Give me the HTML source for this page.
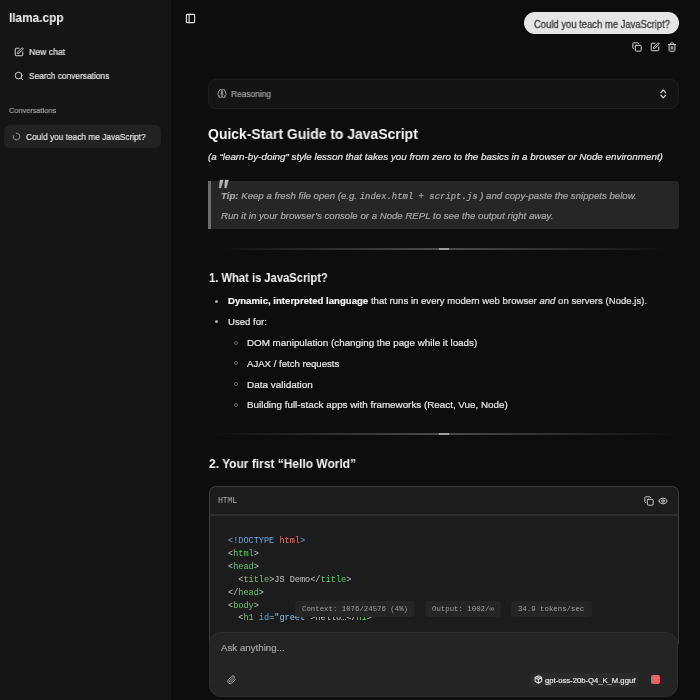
<!DOCTYPE html>
<html><head><meta charset="utf-8">
<style>
*{margin:0;padding:0;box-sizing:border-box}
html,body{width:700px;height:700px;overflow:hidden;background:#0d0d0d;font-family:"Liberation Sans",sans-serif;color:#e8e8e8}
.a{position:absolute}
.mono{font-family:"Liberation Mono",monospace}
svg{position:absolute;overflow:visible}
.hr{position:absolute;left:208px;width:471px;height:2px;background:linear-gradient(90deg,rgba(80,80,80,0),#4c4c4c 50%,rgba(80,80,80,0))}.hl{position:absolute;left:439px;width:9.5px;height:2px;background:#9c9c9c}
.t{position:absolute;white-space:nowrap;line-height:1;transform-origin:0 0;will-change:transform}
.g{color:#66c96e}
</style></head><body>
<div class="a" style="left:0;top:0;width:171px;height:700px;background:#151515"></div>
<svg style="left:14px;top:47px" width="10" height="10" viewBox="0 0 24 24" fill="none" stroke="#d4d4d4" stroke-width="2.4" stroke-linecap="round" stroke-linejoin="round"><path d="M12 3H5a2 2 0 0 0-2 2v14a2 2 0 0 0 2 2h14a2 2 0 0 0 2-2v-7"/><path d="M18.375 2.625a1 1 0 0 1 3 3l-9.013 9.014a2 2 0 0 1-.853.505l-2.873.84a.5.5 0 0 1-.62-.62l.84-2.873a2 2 0 0 1 .506-.852z"/></svg>
<svg style="left:14px;top:71px" width="10" height="10" viewBox="0 0 24 24" fill="none" stroke="#d4d4d4" stroke-width="2.4" stroke-linecap="round" stroke-linejoin="round"><circle cx="11" cy="11" r="8"/><path d="m21 21-4.3-4.3"/></svg>
<div class="a" style="left:4px;top:125px;width:157px;height:23px;border-radius:6px;background:#222"></div>
<svg style="left:12px;top:132px" width="9" height="9" viewBox="0 0 24 24" fill="none" stroke="#a1a1a1" stroke-width="2.5" stroke-linecap="round" stroke-linejoin="round"><path transform="rotate(-95 12 12)" d="M21 12a9 9 0 1 1-6.219-8.56"/></svg>
<svg style="left:185px;top:13px" width="11" height="11" viewBox="0 0 24 24" fill="none" stroke="#e5e5e5" stroke-width="2.4" stroke-linecap="round" stroke-linejoin="round"><rect width="18" height="18" x="3" y="3" rx="2"/><path d="M9 3v18"/></svg>
<div class="a" style="left:524px;top:12px;width:155px;height:22px;border-radius:11px;background:#e5e5e5"></div>
<svg style="left:632px;top:42px" width="10" height="10" viewBox="0 0 24 24" fill="none" stroke="#d4d4d4" stroke-width="2.4" stroke-linecap="round" stroke-linejoin="round"><rect width="14" height="14" x="8" y="8" rx="2"/><path d="M4 16c-1.1 0-2-.9-2-2V4c0-1.1.9-2 2-2h10c1.1 0 2 .9 2 2"/></svg>
<svg style="left:650px;top:42px" width="10" height="10" viewBox="0 0 24 24" fill="none" stroke="#d4d4d4" stroke-width="2.4" stroke-linecap="round" stroke-linejoin="round"><path d="M12 3H5a2 2 0 0 0-2 2v14a2 2 0 0 0 2 2h14a2 2 0 0 0 2-2v-7"/><path d="M18.375 2.625a1 1 0 0 1 3 3l-9.013 9.014a2 2 0 0 1-.853.505l-2.873.84a.5.5 0 0 1-.62-.62l.84-2.873a2 2 0 0 1 .506-.852z"/></svg>
<svg style="left:667px;top:42px" width="10" height="10" viewBox="0 0 24 24" fill="none" stroke="#d4d4d4" stroke-width="2.4" stroke-linecap="round" stroke-linejoin="round"><path d="M3 6h18"/><path d="M19 6v14c0 1-1 2-2 2H7c-1 0-2-1-2-2V6"/><path d="M8 6V4c0-1 1-2 2-2h4c1 0 2 1 2 2v2"/><path d="M10 11v6M14 11v6"/></svg>
<div class="a" style="left:208px;top:79px;width:471px;height:30px;border-radius:8px;background:#141414;border:1px solid #1f1f1f"></div>
<svg style="left:217px;top:88px" width="10" height="11" viewBox="0 0 24 24" fill="none" stroke="#a1a1a1" stroke-width="2.2" stroke-linecap="round" stroke-linejoin="round"><path d="M12 5a3 3 0 1 0-5.997.125 4 4 0 0 0-2.526 5.77 4 4 0 0 0 .556 6.588A4 4 0 1 0 12 18Z"/><path d="M12 5a3 3 0 1 1 5.997.125 4 4 0 0 1 2.526 5.77 4 4 0 0 1-.556 6.588A4 4 0 1 1 12 18Z"/><path d="M15 13a4.5 4.5 0 0 1-3-4 4.5 4.5 0 0 1-3 4"/><path d="M17.599 6.5a3 3 0 0 0 .399-1.375"/><path d="M6.003 5.125A3 3 0 0 0 6.401 6.5"/><path d="M3.477 10.896a4 4 0 0 1 .585-.396"/><path d="M19.938 10.5a4 4 0 0 1 .585.396"/><path d="M6 18a4 4 0 0 1-1.967-.516"/><path d="M19.967 17.484A4 4 0 0 1 18 18"/></svg>
<svg style="left:0;top:0" width="700" height="700" viewBox="0 0 700 700" fill="none" stroke="#c8c8c8" stroke-width="1.3" stroke-linecap="round" stroke-linejoin="round"><path d="M660.9 92.6 L663.25 89.9 L665.6 92.6 M660.9 95.2 L663.25 97.9 L665.6 95.2"/></svg>
<div class="a" style="left:208px;top:181px;width:471px;height:48px;border-radius:0 3px 3px 0;background:#262626;border-left:3px solid #6e6e6e"></div>
<svg style="left:218px;top:179px" width="12" height="10" viewBox="0 0 12 10"><path d="M2.0 1.0 L5.3 1.0 L2.9 8.9 L1.2 8.9 Z M7.0 1.0 L10.5 1.0 L8.4 8.9 L6.6 8.9 Z" fill="#b4b4b4" stroke="#b4b4b4" stroke-width="0.4" stroke-linejoin="round"/></svg>
<div class="hr" style="top:248px"></div><div class="hl" style="top:248px"></div>
<div class="a" style="left:214.5px;top:299.70000000000005px;width:3.8px;height:3.8px;border-radius:50%;background:#a8a8a8"></div>
<div class="a" style="left:214.5px;top:319.70000000000005px;width:3.8px;height:3.8px;border-radius:50%;background:#a8a8a8"></div>
<div class="a" style="left:234.1px;top:340.59999999999997px;width:4.2px;height:4.2px;border-radius:50%;border:0.8px solid #666"></div>
<div class="a" style="left:234.1px;top:360.9px;width:4.2px;height:4.2px;border-radius:50%;border:0.8px solid #666"></div>
<div class="a" style="left:234.1px;top:382.29999999999995px;width:4.2px;height:4.2px;border-radius:50%;border:0.8px solid #666"></div>
<div class="a" style="left:234.1px;top:402.59999999999997px;width:4.2px;height:4.2px;border-radius:50%;border:0.8px solid #666"></div>
<div class="hr" style="top:433px"></div><div class="hl" style="top:433px"></div>
<div class="a" style="left:209px;top:486px;width:470px;height:158px;border-radius:7px 7px 0 0;background:#1c1c1c;border:1px solid #3c3c3c;border-bottom:none"></div>
<div class="a" style="left:210px;top:514px;width:468px;height:2px;background:#2f2f2f"></div>
<svg style="left:644px;top:496px" width="10" height="10" viewBox="0 0 24 24" fill="none" stroke="#c8c8c8" stroke-width="2.4" stroke-linecap="round" stroke-linejoin="round"><rect width="14" height="14" x="8" y="8" rx="2"/><path d="M4 16c-1.1 0-2-.9-2-2V4c0-1.1.9-2 2-2h10c1.1 0 2 .9 2 2"/></svg>
<svg style="left:658px;top:496px" width="10" height="10" viewBox="0 0 24 24" fill="none" stroke="#c8c8c8" stroke-width="2.4" stroke-linecap="round" stroke-linejoin="round"><path d="M2.062 12.348a1 1 0 0 1 0-.696 10.75 10.75 0 0 1 19.876 0 1 1 0 0 1 0 .696 10.75 10.75 0 0 1-19.876 0"/><circle cx="12" cy="12" r="3"/></svg>
<div class="t mono" style="left:227.7px;top:534.87px;font-size:8.57px;line-height:12.9px;color:#c4c4c4;white-space:pre"><span style="color:#6aa8e0">&lt;!DOCTYPE <span style="color:#e8705f">html</span>&gt;</span>
&lt;<span class="g">html</span>&gt;
&lt;<span class="g">head</span>&gt;
  &lt;<span class="g">title</span>&gt;JS Demo&lt;/<span class="g">title</span>&gt;
&lt;/<span class="g">head</span>&gt;
&lt;<span class="g">body</span>&gt;
  &lt;<span class="g">h1</span> <span style="color:#5fa0dc">id</span>=<span style="color:#90c2f0">"greet"</span>&gt;Hello…&lt;/<span class="g">h1</span>&gt;</div>
<div id="logo" class="t" style="left:9.20px;top:12px;font-size:12.8px;font-weight:bold;transform:scaleX(0.9232);color:#f5f5f5">llama.cpp</div>
<div id="newchat" class="t" style="left:28.90px;top:47px;font-size:9.6px;transform:scaleX(0.9050);-webkit-text-stroke:0.2px currentColor;color:#e5e5e5">New chat</div>
<div id="search" class="t" style="left:28.90px;top:71px;font-size:9.6px;transform:scaleX(0.8703);-webkit-text-stroke:0.2px currentColor;color:#e5e5e5">Search conversations</div>
<div id="convs" class="t" style="left:8.75px;top:107px;font-size:8.0px;transform:scaleX(0.9200);-webkit-text-stroke:0.2px currentColor;color:#a1a1a1">Conversations</div>
<div id="conv1" class="t" style="left:25.75px;top:132px;font-size:9.6px;transform:scaleX(0.8662);-webkit-text-stroke:0.2px currentColor;color:#e5e5e5">Could you teach me JavaScript?</div>
<div id="bubble" class="t" style="left:533.80px;top:20px;font-size:10.2px;transform:scaleX(0.9266);color:#3a3a3a;-webkit-text-stroke:0.3px #3a3a3a">Could you teach me JavaScript?</div>
<div id="reason" class="t" style="left:230.90px;top:90px;font-size:9.0px;transform:scaleX(0.9319);-webkit-text-stroke:0.2px currentColor;color:#a1a1a1">Reasoning</div>
<div id="h1" class="t" style="left:208.40px;top:127px;font-size:14.0px;font-weight:bold;transform:scaleX(0.9950);color:#f5f5f5">Quick-Start Guide to JavaScript</div>
<div id="sub" class="t" style="left:208.40px;top:152px;font-size:9.6px;font-style:italic;transform:scaleX(1.0241);-webkit-text-stroke:0.2px currentColor;color:#e5e5e5">(a “learn-by-doing” style lesson that takes you from zero to the basics in a browser or Node environment)</div>
<div id="tip1" class="t" style="left:220.90px;top:191px;font-size:9.6px;font-style:italic;transform:scaleX(1.0055);-webkit-text-stroke:0.2px currentColor;color:#a8a8a8"><b>Tip:</b> Keep a fresh file open (e.g. <span class="mono" style="font-size:8.9px">index.html + script.js</span> ) and copy-paste the snippets below.</div>
<div id="tip2" class="t" style="left:220.50px;top:211px;font-size:9.6px;font-style:italic;transform:scaleX(1.0042);-webkit-text-stroke:0.2px currentColor;color:#a8a8a8">Run it in your browser’s console or a Node REPL to see the output right away.</div>
<div id="h2a" class="t" style="left:208.50px;top:272px;font-size:12.5px;font-weight:bold;transform:scaleX(0.8953);color:#f5f5f5">1. What is JavaScript?</div>
<div id="li1" class="t" style="left:228.30px;top:296px;font-size:9.6px;transform:scaleX(0.9997);-webkit-text-stroke:0.2px currentColor;color:#e5e5e5"><b style="color:#f5f5f5">Dynamic, interpreted language</b> that runs in every modern web browser <i>and</i> on servers (Node.js).</div>
<div id="li2" class="t" style="left:228.30px;top:317px;font-size:9.6px;transform:scaleX(1.0016);-webkit-text-stroke:0.2px currentColor;color:#e5e5e5">Used for:</div>
<div id="li3" class="t" style="left:247.30px;top:338px;font-size:9.6px;transform:scaleX(1.0229);-webkit-text-stroke:0.2px currentColor;color:#e5e5e5">DOM manipulation (changing the page while it loads)</div>
<div id="li4" class="t" style="left:247.30px;top:359px;font-size:9.6px;transform:scaleX(1.0004);-webkit-text-stroke:0.2px currentColor;color:#e5e5e5">AJAX / fetch requests</div>
<div id="li5" class="t" style="left:247.30px;top:380px;font-size:9.6px;transform:scaleX(1.0383);-webkit-text-stroke:0.2px currentColor;color:#e5e5e5">Data validation</div>
<div id="li6" class="t" style="left:247.30px;top:400px;font-size:9.6px;transform:scaleX(1.0243);-webkit-text-stroke:0.2px currentColor;color:#e5e5e5">Building full-stack apps with frameworks (React, Vue, Node)</div>
<div id="h2b" class="t" style="left:208.70px;top:458px;font-size:12.5px;font-weight:bold;transform:scaleX(0.9577);color:#f5f5f5">2. Your first “Hello World”</div>
<div id="html" class="t" style="left:218.40px;top:497px;font-size:8.5px;font-family:'Liberation Mono',monospace;transform:scaleX(0.9409);color:#b0b0b0">HTML</div>
<div class="a" style="left:295px;top:601px;width:120px;height:16px;border-radius:4px;background:#252525"></div>
<div class="t mono" style="left:301.8px;top:606.25px;font-size:7.37px;color:#a1a1a1">Context: 1076/24576 (4%)</div>
<div class="a" style="left:425px;top:601px;width:76px;height:16px;border-radius:4px;background:#252525"></div>
<div class="t mono" style="left:431.8px;top:606.25px;font-size:7.37px;color:#a1a1a1">Output: 1002/∞</div>
<div class="a" style="left:511px;top:601px;width:81px;height:16px;border-radius:4px;background:#252525"></div>
<div class="t mono" style="left:517.8px;top:606.25px;font-size:7.37px;color:#a1a1a1">34.9 tokens/sec</div>
<div class="a" style="left:171px;top:697px;width:529px;height:3px;background:#0d0d0d"></div>
<div class="a" style="left:209px;top:632px;width:469px;height:65px;border-radius:12px;background:#242424;border:1px solid #2e2e2e"></div>
<svg style="left:226.5px;top:675px" width="9.5" height="9.5" viewBox="0 0 24 24" fill="none" stroke="#a1a1a1" stroke-width="2.5" stroke-linecap="round" stroke-linejoin="round"><path d="m21.44 11.05-9.19 9.19a6 6 0 0 1-8.49-8.49l8.57-8.57A4 4 0 1 1 18 8.84l-8.59 8.57a2 2 0 0 1-2.83-2.83l8.49-8.48"/></svg>
<div class="a" style="left:530px;top:673px;width:109px;height:14px;border-radius:4px;background:#2a2a2a"></div>
<svg style="left:533.6px;top:675.2px" width="8.8" height="8.8" viewBox="0 0 24 24" fill="none" stroke="#e8e8e8" stroke-width="2.8" stroke-linecap="round" stroke-linejoin="round"><path d="M11 21.73a2 2 0 0 0 2 0l7-4A2 2 0 0 0 21 16V8a2 2 0 0 0-1-1.73l-7-4a2 2 0 0 0-2 0l-7 4A2 2 0 0 0 3 8v8a2 2 0 0 0 1 1.73z"/><path d="M12 22V12"/><path d="m3.3 7 7.703 4.734a2 2 0 0 0 1.994 0L20.7 7"/><path d="m7.5 4.27 9 5.15"/></svg>
<div class="a" style="left:651px;top:675px;width:9px;height:9px;border-radius:2px;background:#f06060"></div>
<div id="ask" class="t" style="left:220.90px;top:643px;font-size:9.6px;transform:scaleX(1.0121);-webkit-text-stroke:0.2px currentColor;color:#a1a1a1">Ask anything...</div>
<div id="model" class="t" style="left:545.20px;top:677px;font-size:7.6px;transform:scaleX(1.0089);-webkit-text-stroke:0.2px currentColor;color:#e5e5e5">gpt-oss-20b-Q4_K_M.gguf</div>
</body></html>
